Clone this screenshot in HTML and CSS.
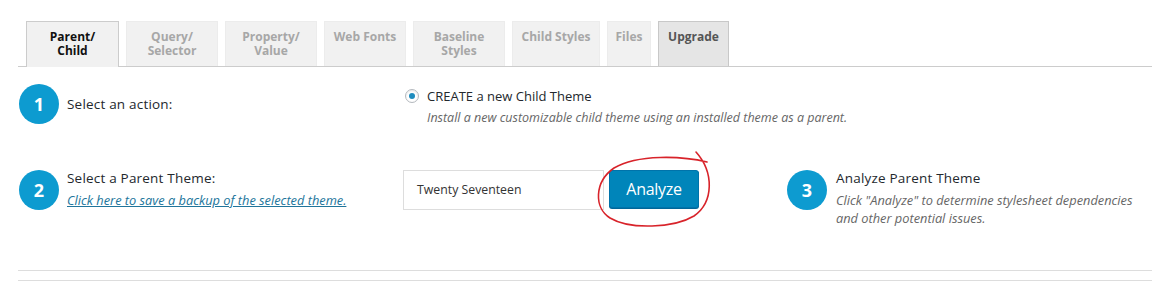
FILE: index.html
```html
<!DOCTYPE html>
<html>
<head>
<meta charset="utf-8">
<link rel="stylesheet" href="styles.css">
</head>
<body>
<div class="page">
  <div class="tabs">
    <div class="tab active">Parent/<br>Child</div>
    <div class="tab w92">Query/<br>Selector</div>
    <div class="tab w92">Property/<br>Value</div>
    <div class="tab w82">Web Fonts</div>
    <div class="tab w92">Baseline<br>Styles</div>
    <div class="tab w88">Child Styles</div>
    <div class="tab w44">Files</div>
    <div class="tab upgrade">Upgrade</div>
  </div>

  <div class="row row1">
    <div class="col-left">
      <div class="num">1</div>
      <div class="label">Select an action:</div>
    </div>
    <div class="col-mid">
      <div class="radio-line"><span class="radio"><span class="dot"></span></span><span class="radio-text">CREATE a new Child Theme</span></div>
      <div class="desc">Install a new customizable child theme using an installed theme as a parent.</div>
    </div>
  </div>

  <div class="row row2">
    <div class="col-left top">
      <div class="num">2</div>
      <div class="label-block">
        <div class="label">Select a Parent Theme:</div>
        <a class="link" href="#">Click here to save a backup of the selected theme.</a>
      </div>
    </div>
    <div class="col-mid controls">
      <div class="select">Twenty Seventeen</div>
      <div class="btn-wrap">
        <button class="btn">Analyze</button>
        <svg class="circle-mark" viewBox="0 0 130 85" width="130" height="85">
          <path d="M106 6 C124 26 124 56 104 70 C84 82 40 84 20 72 C4 62 4 36 24 22 C48 8 92 10 117 16" fill="none" stroke="#d8232a" stroke-width="1.6" stroke-linecap="round"/>
        </svg>
      </div>
    </div>
    <div class="col-right">
      <div class="num">3</div>
      <div class="label-block">
        <div class="label">Analyze Parent Theme</div>
        <div class="desc small">Click "Analyze" to determine stylesheet dependencies<br>and other potential issues.</div>
      </div>
    </div>
  </div>

  <div class="rule r1"></div>
  <div class="rule r2"></div>
</div>
</body>
</html>
```

FILE: styles.css
```css
* { box-sizing: border-box; }
html, body { margin: 0; padding: 0; background: #fff; }
body {
  font-family: "Open Sans", "Noto Sans", sans-serif;
  font-size: 13px;
  color: #23282d;
  width: 1152px;
  height: 281px;
  overflow: hidden;
}
.page { padding-top: 21px; }
.tabs {
  display: flex;
  margin-left: 18px;
  padding-left: 8px;
  border-bottom: 1px solid #ccc;
  height: 46px;
  gap: 7px;
}
.tab {
  height: 45px;
  background: #f1f1f1;
  border: 1px solid #ececec;
  border-bottom: none;
  color: #a7a7a7;
  font-weight: 700;
  font-size: 12px;
  line-height: 14px;
  text-align: center;
  padding-top: 8px;
}
.tab.active { width: 93px; color: #111; border-color: #ccc; background: #f1f1f1; height: 46px; }
.w92 { width: 92px; }
.w82 { width: 82px; }
.w88 { width: 88px; }
.w44 { width: 44px; }
.tab.upgrade { width: 71px; background: #e5e5e5; border-color: #c8c8c8; color: #555; }

.row { display: flex; margin-left: 19px; }
.row1 { margin-top: 17px; height: 40px; }
.row2 { margin-top: 46px; height: 42px; }
.col-left { width: 384px; display: flex; align-items: center; gap: 8px; }
.col-left.top { align-items: flex-start; }
.col-mid { width: 384px; }
.col-right { display: flex; align-items: flex-start; gap: 9px; }
.num {
  width: 40px; height: 40px; border-radius: 50%;
  background: #0d9bd0;
  color: #fff;
  font-weight: 700;
  font-size: 18px;
  display: flex; align-items: center; justify-content: center;
  flex: none;
}
.label { font-size: 13.5px; line-height: 20px; color: #23282d; letter-spacing: 0.2px; }
.label-block { display: flex; flex-direction: column; margin-top: -2px; }
.link {
  font-style: italic;
  font-size: 12.8px;
  line-height: 18px;
  margin-top: 3px;
  color: #21759b;
  text-decoration: underline;
}
.row1 .col-mid { padding-top: 3px; padding-left: 2px; }
.radio-line { display: flex; align-items: center; height: 18px; }
.radio {
  width: 14px; height: 14px; border-radius: 50%;
  border: 1px solid #b4b9be;
  background: #fff;
  display: flex; align-items: center; justify-content: center;
  box-shadow: inset 0 1px 2px rgba(0,0,0,0.1);
}
.dot { width: 6px; height: 6px; border-radius: 50%; background: #1e8cbe; }
.radio-text { margin-left: 8px; font-size: 13px; }
.desc {
  font-style: italic;
  color: #666;
  font-size: 12.5px;
  line-height: 20px;
  margin-left: 22px;
  margin-top: 3px;
  white-space: nowrap;
}
.desc.small { margin: 3px 0 0 0; font-size: 12.8px; line-height: 18px; }
.controls { display: flex; align-items: flex-start; gap: 5px; padding-left: 0; }
.select {
  width: 201px; height: 40px;
  border: 1px solid #ddd;
  background: #fff;
  font-size: 12.3px;
  color: #333;
  padding: 10px 0 0 13px;
}
.btn-wrap { position: relative; }
.btn {
  width: 90px; height: 38px;
  background: #0085ba;
  border: 1px solid #0073aa;
  border-radius: 3px;
  color: #fff;
  font-family: "Open Sans", "Noto Sans", sans-serif;
  font-size: 16px;
  padding: 0;
  box-shadow: 0 1px 0 #006799;
  letter-spacing: -0.3px;
}
.circle-mark { position: absolute; left: -19px; top: -24px; pointer-events: none; }
.rule { height: 1px; background: #ddd; margin-left: 18px; }
.r1 { margin-top: 58px; }
.r2 { margin-top: 9px; }
```
